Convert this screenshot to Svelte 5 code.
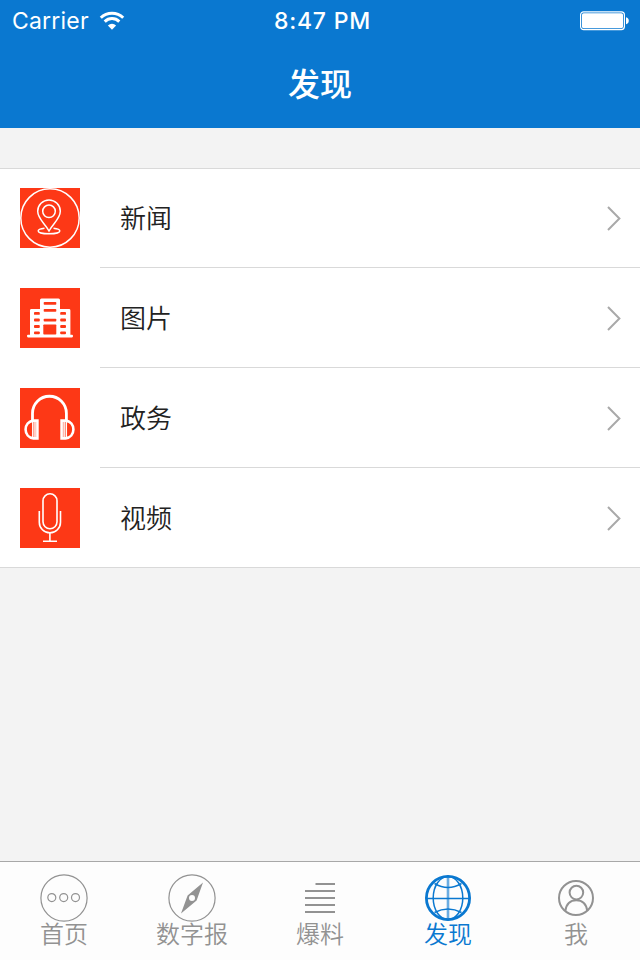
<script>
  const rows = [
    { icon: 'pin', label: '新闻' },
    { icon: 'building', label: '图片' },
    { icon: 'headphones', label: '政务' },
    { icon: 'mic', label: '视频' }
  ];

  const tabs = [
    { icon: 'dots', label: '首页' },
    { icon: 'compass', label: '数字报' },
    { icon: 'lines', label: '爆料' },
    { icon: 'globe', label: '发现' },
    { icon: 'user', label: '我' }
  ];

  const windowRows = [25.4, 32, 38.5, 44.8];

  let active = $state('globe');
</script>

<div class="screen">
  <header>
    <div class="status">
      <div class="carrier">
        <span>Carrier</span>
        <svg width="26" height="20" viewBox="0 0 26 20" fill="none" stroke="#fff" stroke-width="3">
          <path d="M1.8 6.7 A16 16 0 0 1 24.2 6.7" />
          <path d="M5.7 10.6 A10.4 10.4 0 0 1 20.3 10.6" />
          <path d="M13 18.8 L8.9 14.4 A6 6 0 0 1 17.1 14.4 Z" fill="#fff" stroke="none" />
        </svg>
      </div>
      <span class="time">8:47 PM</span>
      <svg class="battery" width="50" height="20" viewBox="0 0 50 20">
        <rect x="0.6" y="0.8" width="43.8" height="17.8" rx="3" fill="none" stroke="#fff" stroke-width="1.2" />
        <rect x="2" y="2.2" width="41" height="15" rx="1.6" fill="#fff" />
        <path d="M46 6.2 C49.7 6.7 49.7 12.7 46 13.2 Z" fill="#fff" />
      </svg>
    </div>
    <h1>发现</h1>
  </header>

  <ul class="list">
    {#each rows as row}
      <li>
        <svg class="tile" width="60" height="60" viewBox="0 0 60 60" fill="none" stroke="#fff">
          {#if row.icon === 'pin'}
            <g stroke-width="1.5">
              <circle cx="30" cy="30" r="29.2" />
              <path d="M29 43 C25.6 36 17.7 31 17.7 23.3 A11.3 11.3 0 0 1 40.3 23.3 C40.3 31 32.4 36 29 43 Z" />
              <circle cx="29" cy="23.3" r="6.3" />
              <path d="M24.5 40.3 C20.5 40.8 18.2 41.7 18.2 42.9 C18.2 44.6 23 45.8 29 45.8 S39.8 44.6 39.8 42.9 C39.8 41.7 37.5 40.8 33.5 40.3" />
            </g>
          {:else if row.icon === 'building'}
            <g stroke="none">
              <path fill="#fff" d="M20 21 V12 Q20 10.5 21.5 10.5 H38.5 Q40 10.5 40 12 V21 H49 Q50.4 21 50.4 22.4 V46.8 H52 Q53 46.8 53 48.1 T52 49.4 H8 Q7 49.4 7 48.1 T8 46.8 H10 V22.4 Q10 21 11.4 21 Z" />
              <g fill="#fd3816">
                <rect x="23.7" y="14" width="12.6" height="2.8" rx=".8" />
                <rect x="23.7" y="21" width="12.6" height="2.8" rx=".8" />
                <rect x="23.7" y="30.7" width="12.6" height="2.8" rx=".8" />
                <rect x="23.3" y="36.5" width="13" height="10" rx=".8" />
                {#each windowRows as y}
                  <rect x="14" y={y - 1.4} width="5.8" height="2.8" rx=".9" />
                  <rect x="40.2" y={y - 1.4} width="5.8" height="2.8" rx=".9" />
                {/each}
              </g>
            </g>
          {:else if row.icon === 'headphones'}
            <path stroke-width="2.8" d="M12.5 32 V25.3 A16.9 17 0 0 1 46.4 25.3 V32" />
            <g stroke-width="2.6">
              <path d="M13 32.6 H17.4 V50.4 H13.5 C8.6 49.6 5.6 46 5.6 41.5 S8.6 33.4 13 32.6 Z" />
              <path d="M46.2 32.6 H41.6 V50.4 H45.5 C50.4 49.6 53.4 46 53.4 41.5 S50.4 33.4 46.2 32.6 Z" />
            </g>
            <path stroke-width="1.5" d="M12.8 32 V51 M15 32 V51 M46.3 32 V51 M44.1 32 V51" />
          {:else}
            <g stroke-width="1.6">
              <rect x="23" y="5.8" width="14" height="35" rx="7" />
              <path d="M19.3 23 V34.2 A10.6 10.6 0 0 0 40.5 34.2 V23" />
              <path d="M29.9 44.8 V53 M23 53.2 H37" />
            </g>
          {/if}
        </svg>
        <div class="cell">
          <span>{row.label}</span>
          <svg width="16" height="28" viewBox="0 0 16 28" fill="none" stroke="#a9a9a9" stroke-width="2">
            <path d="M2 3 L13.4 14.5 L2 26" />
          </svg>
        </div>
      </li>
    {/each}
  </ul>

  <nav>
    {#each tabs as tab}
      <button class:active={active === tab.icon} onclick={() => (active = tab.icon)}>
        <svg width="48" height="48" viewBox="0 0 48 48" fill="none" stroke="currentColor">
          {#if tab.icon === 'dots'}
            <g stroke-width="1.2">
              <circle cx="24" cy="24" r="23.1" />
              <circle cx="11.8" cy="23.6" r="4" />
              <circle cx="23.7" cy="23.6" r="4" />
              <circle cx="35.5" cy="23.6" r="4" />
            </g>
          {:else if tab.icon === 'compass'}
            <circle cx="24" cy="24" r="23.1" stroke-width="1.2" />
            <path stroke="none" fill="currentColor" fill-rule="evenodd" d="M35 8.5 L28.6 26.5 L13 39.5 L19.6 21.5 Z M24 21 A3 3 0 1 0 24 27 A3 3 0 1 0 24 21 Z" />
          {:else if tab.icon === 'lines'}
            <path stroke-width="1.8" d="M19.5 10 H39 M9 17 H39 M9 24 H39 M9 31 H39 M9 38 H39" />
          {:else if tab.icon === 'globe'}
            <circle cx="24" cy="24" r="21.6" stroke-width="2.8" />
            <g stroke-width="1.5">
              <ellipse cx="24" cy="24" rx="14.8" ry="21.5" />
              <path d="M2 24.5 H46" />
              <path d="M10.5 9.5 Q24 17.5 37.5 9.5 M10.5 38.5 Q24 31.5 37.5 38.5" />
            </g>
            <path stroke-width="2.6" stroke-opacity="0.6" d="M24 3 V45" />
          {:else}
            <g stroke-width="2">
              <circle cx="24" cy="24" r="17" />
              <circle cx="24.4" cy="18.6" r="6.8" />
              <path d="M13.3 37 C14.3 30 18.4 26.3 24.3 26.3 S34.3 30 35.3 37" />
            </g>
          {/if}
        </svg>
        <span>{tab.label}</span>
      </button>
    {/each}
  </nav>
</div>

<style>
  :global(body) { margin: 0; }

  .screen {
    width: 640px; height: 960px;
    display: flex; flex-direction: column;
    background: #f3f3f3;
    font-family: Inter, "Noto Sans CJK SC", sans-serif;
    overflow: hidden;
  }

  /* --- HEADER --- */
  header { height: 128px; background: #0a78d0; color: #fff; flex-shrink: 0; }
  .status {
    height: 40px; padding: 0 10px 0 12px; box-sizing: border-box;
    display: grid; grid-template-columns: 1fr auto 1fr; align-items: center;
    font-size: 23px; line-height: 40px;
  }
  .carrier { display: flex; align-items: center; gap: 10px; letter-spacing: 0.2px; }
  .carrier span, .time { padding-top: 1px; }
  .time { font-weight: 500; letter-spacing: 0.8px; padding-left: 3px; }
  .battery { justify-self: end; }
  h1 {
    margin: 0; text-align: center;
    font-size: 32px; font-weight: 500; line-height: 90px;
  }

  /* --- LIST --- */
  .list {
    margin: 40px 0 0; padding: 0; list-style: none;
    background: #fff;
    box-shadow: inset 0 1px #d9d9d9, inset 0 -1px #d9d9d9;
  }
  li { height: 100px; padding-left: 20px; display: flex; align-items: center; gap: 20px; }
  .tile { background: #fd3816; flex-shrink: 0; }
  .cell {
    flex: 1; height: 100px; box-sizing: border-box;
    padding: 0 18px 0 20px;
    display: flex; align-items: center; justify-content: space-between;
    border-bottom: 1px solid #d9d9d9;
    font-size: 26px; color: #222;
  }
  .cell span { padding-bottom: 2px; font-weight: 350; }

  /* --- TAB BAR --- */
  nav {
    margin-top: auto; height: 99px; box-sizing: border-box;
    display: flex;
    background: #fdfdfd; border-top: 1px solid #a8a8a8;
  }
  button {
    flex: 1; padding: 12px 0 0; border: 0; background: none;
    display: flex; flex-direction: column; align-items: center; justify-content: flex-start;
    font: inherit; font-size: 24px; line-height: 26px; font-weight: 350; color: #929292;
  }
  button.active { color: #0a78d0; }
</style>
